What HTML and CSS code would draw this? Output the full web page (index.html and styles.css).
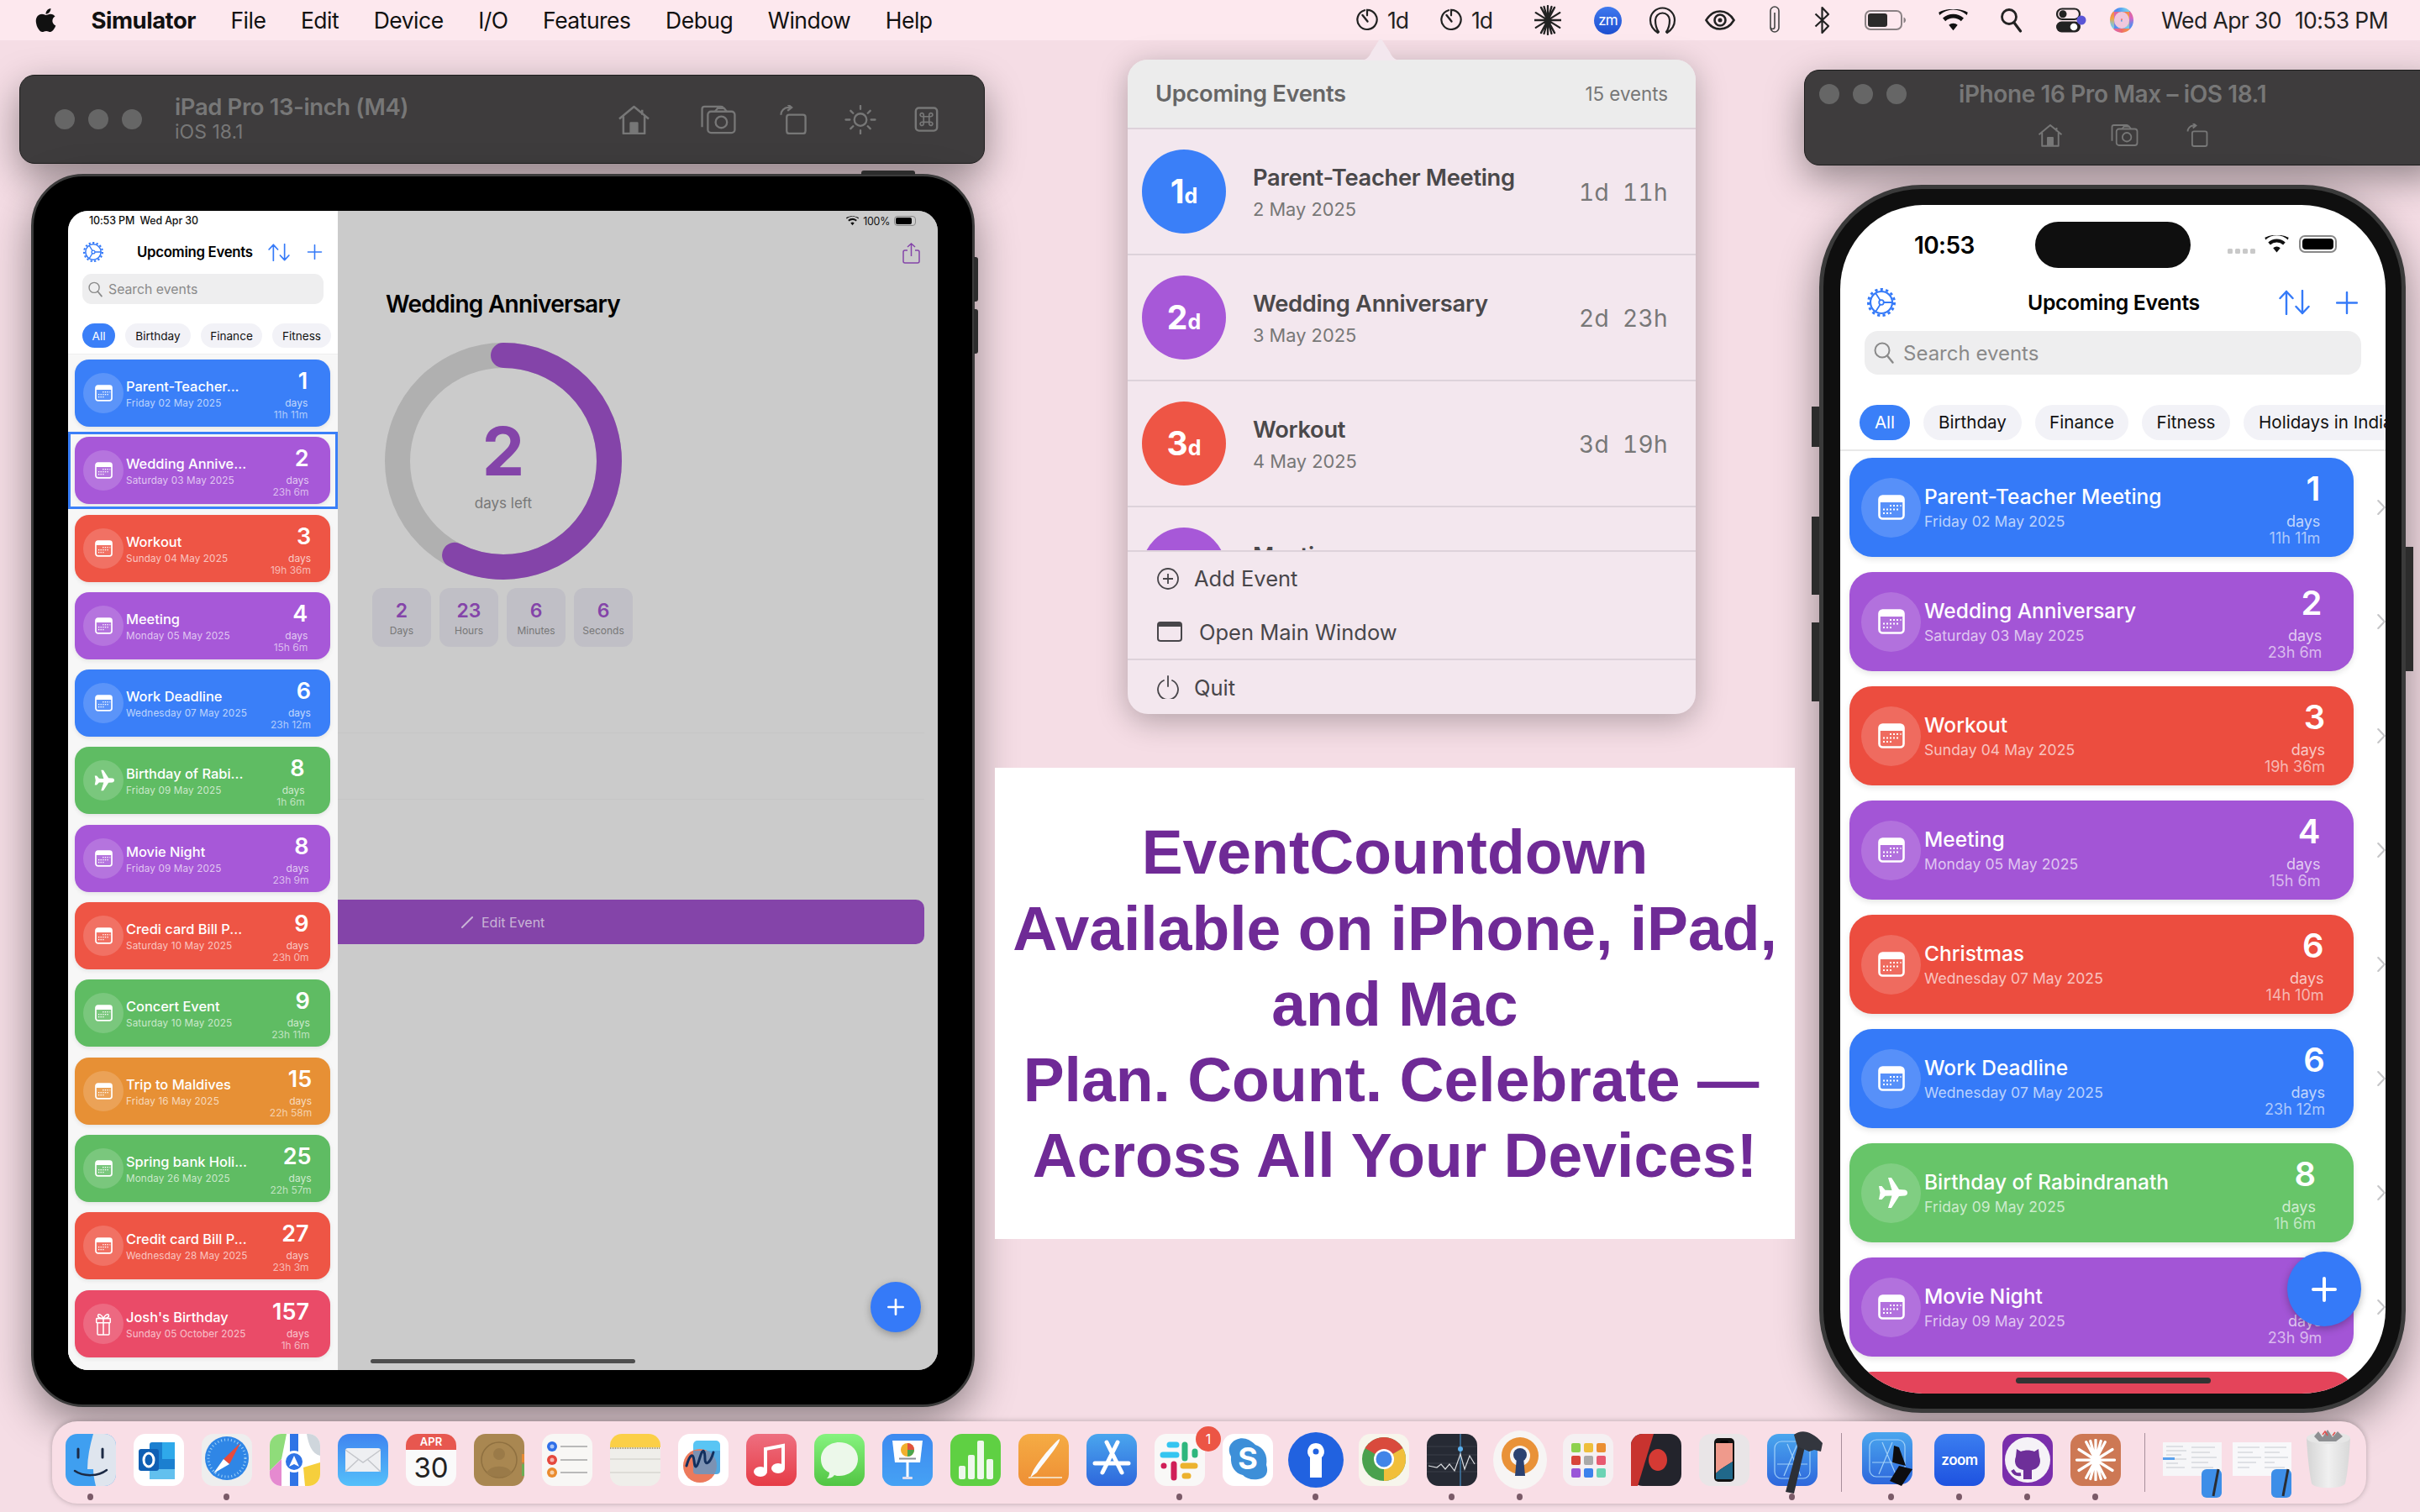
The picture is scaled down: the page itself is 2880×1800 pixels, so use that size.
FILE: index.html
```html
<!DOCTYPE html>
<html lang="en">
<head>
<meta charset="utf-8">
<title>EventCountdown</title>
<link rel="stylesheet" href="styles.css">
</head>
<body>
<svg class="defs" width="0" height="0" aria-hidden="true">
  <defs>
    <symbol id="cal" viewBox="0 0 32 30"><rect x="1.5" y="1.5" width="29" height="27" rx="4" fill="none" stroke="#fff" stroke-width="2.6"/><path d="M1.5 9V5.5a4 4 0 0 1 4-4h21a4 4 0 0 1 4 4V9z" fill="#fff"/><g fill="#fff"><rect x="14" y="12" width="2" height="2"/><rect x="18" y="12" width="2" height="2"/><rect x="22" y="12" width="2" height="2"/><rect x="26" y="12" width="2" height="2" opacity=".6"/><rect x="6" y="16.500" width="2" height="2"/><rect x="10" y="16.500" width="2" height="2"/><rect x="14" y="16.500" width="2" height="2"/><rect x="18" y="16.500" width="2" height="2"/><rect x="22" y="16.500" width="2" height="2"/><rect x="6" y="21" width="2" height="2"/><rect x="10" y="21" width="2" height="2"/><rect x="14" y="21" width="2" height="2"/></g></symbol>
    <symbol id="plane" viewBox="0 0 38 38"><path d="M15 1h4l9 14 7 .5c2 .3 3 1.800 3 3.500s-1 3.200-3 3.500l-7 .5-9 14h-4l4.500-14.500-8 .3L7.500 27H4l1.500-8L4 11h3.500l4 4.700 8 .3z" fill="#fff"/></symbol>
    <symbol id="gift" viewBox="0 0 30 44"><g fill="none" stroke="#fff" stroke-width="2.400"><rect x="2" y="12" width="26" height="8" rx="1"/><path d="M4 20v21a1.500 1.500 0 0 0 1.500 1.500h19A1.500 1.500 0 0 0 26 41V20M15 12v31M15 12c-3-7-9-10-10-6-1 4 5 6 10 6zM15 12c3-7 9-10 10-6 1 4-5 6-10 6z"/></g></symbol>
    <symbol id="gear" viewBox="0 0 34 34"><g fill="none" stroke="#357af8"><circle cx="17" cy="17" r="13" stroke-width="2.200"/><circle cx="17" cy="17" r="15.500" stroke-width="3" stroke-dasharray="3.200 3.280"/><circle cx="17" cy="17" r="2.800" stroke-width="1.800"/><path d="M19.800 17H30M15.600 14.600 10 5.800M15.600 19.400 10 28.200" stroke-width="1.800"/></g></symbol>
    <symbol id="sort" viewBox="0 0 37 30"><path d="M9 29V2M1.500 10 9 2l7.500 8M28 1v27M20.500 20l7.500 8 7.500-8" fill="none" stroke="#357af8" stroke-width="2.400" stroke-linecap="round" stroke-linejoin="round"/></symbol>
    <symbol id="plus" viewBox="0 0 26 27"><path d="M13 1v25M1 13.500h24" fill="none" stroke="#357af8" stroke-width="2.400" stroke-linecap="round"/></symbol>
    <symbol id="glass" viewBox="0 0 24 26"><circle cx="10" cy="10" r="8.500" fill="none" stroke="#8a8a8a" stroke-width="2"/><path d="M16 16.500l6.500 8" stroke="#8a8a8a" stroke-width="2.400" stroke-linecap="round"/></symbol>
    <symbol id="wifi" viewBox="0 0 30 22"><path d="M15 21.500 10.500 16a6.500 6.500 0 0 1 9 0zM7 12a11.800 11.800 0 0 1 16 0l2.700-3.200a16 16 0 0 0-21.400 0zM1 5.800a20.500 20.500 0 0 1 28 0L29.800 3C21-1.500 9-1.500.2 3z" fill="#111"/></symbol>
    <symbol id="chev" viewBox="0 0 12 22"><path d="M1.500 1.500 10.500 11l-9 9.500" fill="none" stroke="#c6c6c8" stroke-width="2.600" stroke-linecap="round" stroke-linejoin="round"/></symbol>
    <symbol id="whiteplus" viewBox="0 0 30 30"><path d="M15 2v26M2 15h26" fill="none" stroke="#fff" stroke-width="4" stroke-linecap="round"/></symbol>
    <symbol id="timer" viewBox="0 0 26 30"><path d="M10 3.200a11.600 11.600 0 1 0 3-.4v6.500" fill="none" stroke="#222" stroke-width="2.200" stroke-linecap="round"/><path d="M7.500 9 13.500 16.500" stroke="#222" stroke-width="2.400" stroke-linecap="round"/></symbol>
    <symbol id="t-home" viewBox="0 0 40 36"><path d="M2 17 20 2l18 15M7 14v21h26V14M16 35V22h8v13M30 6v6" fill="none" stroke="#777" stroke-width="2.600" stroke-linejoin="round"/><rect x="16" y="22" width="8" height="13" fill="#777"/></symbol>
    <symbol id="t-cam" viewBox="0 0 44 36"><g fill="none" stroke="#777" stroke-width="2.400"><path d="M2 27V5a3 3 0 0 1 3-3h20a3 3 0 0 1 3 3"/><rect x="9" y="8" width="33" height="26" rx="4"/><path d="M18 8l3-4h8l3 4"/><circle cx="25.500" cy="21" r="7"/></g></symbol>
    <symbol id="t-rot" viewBox="0 0 34 36"><g fill="none" stroke="#777" stroke-width="2.400"><rect x="9" y="12" width="23" height="23" rx="3"/><path d="M2 12a9 9 0 0 1 9-9h3M10 -1l5 4-5 4"/></g></symbol>
    <symbol id="t-sun" viewBox="0 0 40 36"><g fill="none" stroke="#777" stroke-width="2.400" stroke-linecap="round"><circle cx="20" cy="18" r="7.500"/><path d="M20 1v4M20 31v4M2 18h5M33 18h5M8 7l3 3M32 7l-3 3M8 29l3-3M32 29l-3-3"/></g></symbol>
    <symbol id="t-key" viewBox="0 0 30 32"><rect x="1.500" y="1.500" width="27" height="29" rx="4" fill="none" stroke="#777" stroke-width="2.600"/><path d="M11.500 12.500h7v7h-7zM11.500 12.500h-2a2.200 2.200 0 1 1 2-2zM18.500 12.500h2a2.200 2.200 0 1 0-2-2zM11.500 19.500h-2a2.200 2.200 0 1 0 2 2zM18.500 19.500h2a2.200 2.200 0 1 1-2 2z" fill="none" stroke="#777" stroke-width="1.800"/></symbol>
    <symbol id="burst" viewBox="0 0 36 40"><g stroke-width="2.600" stroke-linecap="round"><path d="M18 1v38M9 3l18 34M27 3 9 37M2 10l32 20M34 10 2 30M0 20h36M13 2l10 36M23 2 13 38"/></g></symbol>
    <linearGradient id="gBlue" x1="0" y1="0" x2="0" y2="1"><stop offset="0" stop-color="#3f84f0"/><stop offset="1" stop-color="#55c0fa"/></linearGradient>
    <linearGradient id="gBlue2" x1="0" y1="0" x2="0" y2="1"><stop offset="0" stop-color="#4aa6ee"/><stop offset="1" stop-color="#2e67dc"/></linearGradient>
    <linearGradient id="gRed" x1="0" y1="0" x2="0" y2="1"><stop offset="0" stop-color="#ee6f80"/><stop offset="1" stop-color="#e63c46"/></linearGradient>
    <linearGradient id="gGreen" x1="0" y1="0" x2="0" y2="1"><stop offset="0" stop-color="#86f37f"/><stop offset="1" stop-color="#52c543"/></linearGradient>
    <linearGradient id="gOrange" x1="0" y1="0" x2="0" y2="1"><stop offset="0" stop-color="#f5ac44"/><stop offset="1" stop-color="#ee8f35"/></linearGradient>
    <linearGradient id="gZoom" x1="0" y1="0" x2="0" y2="1"><stop offset="0" stop-color="#3b7ef0"/><stop offset="1" stop-color="#1e52e0"/></linearGradient>
    <linearGradient id="gTrash" x1="0" y1="0" x2="1" y2="0"><stop offset="0" stop-color="#d4d4d4"/><stop offset=".5" stop-color="#f0f0f0"/><stop offset="1" stop-color="#d8d8d8"/></linearGradient>
  </defs>
</svg>

<main class="desktop">
  <header class="menubar">
    <nav class="menu-left">
      <svg class="apple" width="27" height="32" viewBox="0 0 384 512"><path fill="#111" d="M318.700 268.700c-.2-36.700 16.400-64.400 50-84.800-18.800-26.900-47.200-41.700-84.700-44.600-35.500-2.800-74.300 20.700-88.500 20.700-15 0-49.400-19.700-76.400-19.700C63.300 141.200 4 184.800 4 273.500q0 39.300 14.400 81.200c12.800 36.700 59 126.700 107.200 125.200 25.200-.6 43-17.900 75.800-17.900 31.800 0 48.300 17.900 76.400 17.900 48.600-.7 90.400-82.500 102.600-119.300-65.200-30.700-61.700-90-61.700-91.900zm-56.600-164.200c27.300-32.400 24.800-61.900 24-72.500-24.100 1.400-52 16.400-67.900 34.900-17.500 19.800-27.800 44.300-25.600 71.900 26.100 2 49.900-11.400 69.500-34.300z"/></svg>
      <b class="app-name">Simulator</b><span>File</span><span>Edit</span><span>Device</span><span>I/O</span><span>Features</span><span>Debug</span><span>Window</span><span>Help</span>
    </nav>
    <div class="menu-right">
      <span class="extra"><svg width="26" height="30"><use href="#timer"/></svg>1d</span>
      <span class="extra"><svg width="26" height="30"><use href="#timer"/></svg>1d</span>
      <svg class="ml45 ink" width="32" height="36"><use href="#burst"/></svg>
      <span class="zm ml39">zm</span>
      <svg class="ml32" width="33" height="34" viewBox="0 0 33 34"><path d="M11 32C5 28 2 23 2 17a14.500 14.500 0 0 1 29 0c0 6-3 11-9 15M12 31c-3-4-4-9-4-14a8.500 8.500 0 0 1 17 0c0 5-1 10-4 14" fill="none" stroke="#222" stroke-width="2.200" stroke-linecap="round"/></svg>
      <svg class="ml34" width="36" height="24" viewBox="0 0 36 24"><path d="M1.500 12C6 4.500 12 1.500 18 1.500S30 4.500 34.500 12C30 19.500 24 22.500 18 22.500S6 19.500 1.500 12z" fill="none" stroke="#222" stroke-width="2.600"/><circle cx="18" cy="12" r="6.500" fill="none" stroke="#222" stroke-width="2.600"/><circle cx="18" cy="12" r="2.500" fill="#222"/></svg>
      <svg class="ml38" width="17" height="34" viewBox="0 0 17 34"><path d="M4 9v18a5 5 0 0 0 10 0V7a5 5 0 0 0-10 0v19a2 2 0 0 0 5 0V9" transform="translate(0 -1)" fill="none" stroke="#444" stroke-width="1.600"/></svg>
      <svg class="ml39" width="20" height="34" viewBox="0 0 20 34"><path d="M1.500 9.500 17 24l-7.500 8V2L17 10 1.500 24.500" fill="none" stroke="#222" stroke-width="2.200" stroke-linejoin="round"/></svg>
      <svg class="ml40" width="50" height="24" viewBox="0 0 50 24"><rect x="1" y="1" width="43" height="22" rx="6" fill="none" stroke="#8a8184" stroke-width="2"/><rect x="4" y="4" width="23" height="16" rx="3" fill="#2a2a2a"/><path d="M46.500 8.500c2 1 2.500 2.500 2.500 3.500s-.5 2.500-2.500 3.500z" fill="#8a8184"/></svg>
      <svg class="ml38" width="35" height="26"><use href="#wifi"/></svg>
      <svg class="ml38" width="27" height="30" viewBox="0 0 27 30"><circle cx="11" cy="11" r="8.500" fill="none" stroke="#222" stroke-width="2.800"/><path d="M17 18l7.500 10" stroke="#222" stroke-width="3.200" stroke-linecap="round"/></svg>
      <svg class="ml40" width="36" height="30" viewBox="0 0 36 30"><rect x="1" y="1.500" width="27" height="12.500" rx="6.200" fill="none" stroke="#222" stroke-width="2.200"/><circle cx="8" cy="7.700" r="4.500" fill="#222"/><rect x="0" y="16.500" width="29" height="13" rx="6.500" fill="#222"/><circle cx="21" cy="23" r="4.300" fill="#fff"/><circle cx="30" cy="15" r="5.500" fill="#5a55d6"/></svg>
      <span class="siri"></span>
      <span class="clock">Wed Apr 30</span><span class="clock time">10:53 PM</span>
    </div>
  </header>

  <section class="toolbar tb-ipad">
    <div class="lights"><i></i><i></i><i></i></div>
    <div class="tb-title"><strong>iPad Pro 13-inch (M4)</strong><small>iOS 18.1</small></div>
    <svg class="ti-home" width="39" height="35"><use href="#t-home"/></svg>
    <svg class="ti-cam" width="44" height="35"><use href="#t-cam"/></svg>
    <svg class="ti-rot" width="34" height="35"><use href="#t-rot"/></svg>
    <svg class="ti-sun" width="40" height="35"><use href="#t-sun"/></svg>
    <svg class="ti-key" width="29" height="30"><use href="#t-key"/></svg>
  </section>

  <section class="toolbar tb-iphone">
    <div class="tb-row"><div class="lights"><i></i><i></i><i></i></div><strong>iPhone 16 Pro Max – iOS 18.1</strong></div>
    <div class="tb-tools">
      <svg width="30" height="28"><use href="#t-home"/></svg>
      <svg width="33" height="28"><use href="#t-cam"/></svg>
      <svg width="26" height="28"><use href="#t-rot"/></svg>
    </div>
  </section>

  <section class="ipad">
    <i class="btn btn-top"></i><i class="btn btn-r1"></i><i class="btn btn-r2"></i>
    <div class="ipad-screen">
      <aside class="sidebar">
        <div class="pad-status">10:53 PM&nbsp;&nbsp;Wed Apr 30</div>
        <div class="pad-nav">
          <svg width="24" height="24"><use href="#gear"/></svg>
          <span class="nav-title">Upcoming Events</span>
          <svg class="pn-sort" width="26" height="21"><use href="#sort"/></svg>
          <svg class="pn-plus" width="19" height="18"><use href="#plus"/></svg>
        </div>
        <div class="search"><svg width="17" height="19"><use href="#glass"/></svg>Search events</div>
        <div class="pills"><span class="pill on">All</span><span class="pill">Birthday</span><span class="pill">Finance</span><span class="pill">Fitness</span></div>
        <div class="list">
          <article class="card blue"><span class="ic"><svg><use href="#cal"/></svg></span><div class="tx"><h3>Parent-Teacher...</h3><p>Friday 02 May 2025</p></div><div class="slot"><div class="tr"><b>1</b><span>days</span><em>11h 11m</em></div></div></article>
          <article class="card purple sel"><span class="ic"><svg><use href="#cal"/></svg></span><div class="tx"><h3>Wedding Annive...</h3><p>Saturday 03 May 2025</p></div><div class="slot"><div class="tr"><b>2</b><span>days</span><em>23h 6m</em></div></div></article>
          <article class="card red"><span class="ic"><svg><use href="#cal"/></svg></span><div class="tx"><h3>Workout</h3><p>Sunday 04 May 2025</p></div><div class="slot"><div class="tr"><b>3</b><span>days</span><em>19h 36m</em></div></div></article>
          <article class="card purple"><span class="ic"><svg><use href="#cal"/></svg></span><div class="tx"><h3>Meeting</h3><p>Monday 05 May 2025</p></div><div class="slot"><div class="tr"><b>4</b><span>days</span><em>15h 6m</em></div></div></article>
          <article class="card blue"><span class="ic"><svg><use href="#cal"/></svg></span><div class="tx"><h3>Work Deadline</h3><p>Wednesday 07 May 2025</p></div><div class="slot"><div class="tr"><b>6</b><span>days</span><em>23h 12m</em></div></div></article>
          <article class="card green"><span class="ic"><svg class="pl"><use href="#plane"/></svg></span><div class="tx"><h3>Birthday of Rabi...</h3><p>Friday 09 May 2025</p></div><div class="slot"><div class="tr"><b>8</b><span>days</span><em>1h 6m</em></div></div></article>
          <article class="card purple"><span class="ic"><svg><use href="#cal"/></svg></span><div class="tx"><h3>Movie Night</h3><p>Friday 09 May 2025</p></div><div class="slot"><div class="tr"><b>8</b><span>days</span><em>23h 9m</em></div></div></article>
          <article class="card red"><span class="ic"><svg><use href="#cal"/></svg></span><div class="tx"><h3>Credi card Bill P...</h3><p>Saturday 10 May 2025</p></div><div class="slot"><div class="tr"><b>9</b><span>days</span><em>23h 0m</em></div></div></article>
          <article class="card green"><span class="ic"><svg><use href="#cal"/></svg></span><div class="tx"><h3>Concert Event</h3><p>Saturday 10 May 2025</p></div><div class="slot"><div class="tr"><b>9</b><span>days</span><em>23h 11m</em></div></div></article>
          <article class="card orange"><span class="ic"><svg><use href="#cal"/></svg></span><div class="tx"><h3>Trip to Maldives</h3><p>Friday 16 May 2025</p></div><div class="slot"><div class="tr"><b>15</b><span>days</span><em>22h 58m</em></div></div></article>
          <article class="card green"><span class="ic"><svg><use href="#cal"/></svg></span><div class="tx"><h3>Spring bank Holi...</h3><p>Monday 26 May 2025</p></div><div class="slot"><div class="tr"><b>25</b><span>days</span><em>22h 57m</em></div></div></article>
          <article class="card red"><span class="ic"><svg><use href="#cal"/></svg></span><div class="tx"><h3>Credit card Bill P...</h3><p>Wednesday 28 May 2025</p></div><div class="slot"><div class="tr"><b>27</b><span>days</span><em>23h 3m</em></div></div></article>
          <article class="card pink"><span class="ic"><svg class="gf"><use href="#gift"/></svg></span><div class="tx"><h3>Josh's Birthday</h3><p>Sunday 05 October 2025</p></div><div class="slot"><div class="tr"><b>157</b><span>days</span><em>1h 6m</em></div></div></article>
        </div>
      </aside>
      <div class="detail">
        <div class="pad-right-status">
          <svg width="15" height="12"><use href="#wifi"/></svg><span>100%</span>
          <span class="pad-batt"><i></i></span>
        </div>
        <div class="share"><svg width="21" height="25" viewBox="0 0 21 25"><path d="M6 9H3a2 2 0 0 0-2 2v11a2 2 0 0 0 2 2h15a2 2 0 0 0 2-2V11a2 2 0 0 0-2-2h-3M10.500 16V1M6 5l4.500-4L15 5" fill="none" stroke="#8444a9" stroke-width="1.500"/></svg></div>
        <h2 class="d-title">Wedding Anniversary</h2>
        <svg class="ring" width="282" height="282" viewBox="0 0 282 282">
          <circle cx="141" cy="141" r="126" fill="none" stroke="#b0b0b0" stroke-width="30"/>
          <circle cx="141" cy="141" r="126" fill="none" stroke="#8444a9" stroke-width="30" stroke-linecap="round" pathLength="100" stroke-dasharray="57.600 100" transform="rotate(-90 141 141)"/>
          <text class="ring-num" x="141" y="158" text-anchor="middle">2</text>
          <text class="ring-lab" x="141" y="197" text-anchor="middle">days left</text>
        </svg>
        <div class="stats">
          <div class="stat"><b>2</b><span>Days</span></div>
          <div class="stat"><b>23</b><span>Hours</span></div>
          <div class="stat"><b>6</b><span>Minutes</span></div>
          <div class="stat"><b>6</b><span>Seconds</span></div>
        </div>
        <hr class="d-sep s1"><hr class="d-sep s2">
        <div class="edit"><svg width="15" height="15" viewBox="0 0 15 15"><path d="M1 14 13 2" stroke="#c9b5d6" stroke-width="2" stroke-linecap="round"/></svg>Edit Event</div>
        <div class="fab fab-pad"><svg width="20" height="20"><use href="#whiteplus"/></svg></div>
        <i class="home-pad"></i>
      </div>
    </div>
  </section>

  <section class="iphone">
    <i class="btn bl1"></i><i class="btn bl2"></i><i class="btn bl3"></i><i class="btn br1"></i>
    <div class="phone-screen">
      <div class="ph-status">
        <span class="ph-time">10:53</span><i class="island"></i>
        <span class="ph-dots"><i></i><i></i><i></i><i></i></span>
        <svg class="ph-wifi" width="29" height="21"><use href="#wifi"/></svg>
        <span class="ph-batt"><i></i></span>
      </div>
      <div class="ph-nav">
        <svg width="34" height="34"><use href="#gear"/></svg>
        <span class="nav-title">Upcoming Events</span>
        <svg class="ph-sort" width="37" height="30"><use href="#sort"/></svg>
        <svg class="ph-plus" width="26" height="27"><use href="#plus"/></svg>
      </div>
      <div class="search"><svg width="24" height="26"><use href="#glass"/></svg>Search events</div>
      <div class="pills"><span class="pill on">All</span><span class="pill">Birthday</span><span class="pill">Finance</span><span class="pill">Fitness</span><span class="pill">Holidays in India</span></div>
      <div class="list">
        <div class="ph-row"><article class="card blue"><span class="ic"><svg><use href="#cal"/></svg></span><div class="tx"><h3>Parent-Teacher Meeting</h3><p>Friday 02 May 2025</p></div><div class="slot"><div class="tr"><b>1</b><span>days</span><em>11h 11m</em></div></div></article><svg class="chev"><use href="#chev"/></svg></div>
        <div class="ph-row"><article class="card purple"><span class="ic"><svg><use href="#cal"/></svg></span><div class="tx"><h3>Wedding Anniversary</h3><p>Saturday 03 May 2025</p></div><div class="slot"><div class="tr"><b>2</b><span>days</span><em>23h 6m</em></div></div></article><svg class="chev"><use href="#chev"/></svg></div>
        <div class="ph-row"><article class="card red"><span class="ic"><svg><use href="#cal"/></svg></span><div class="tx"><h3>Workout</h3><p>Sunday 04 May 2025</p></div><div class="slot"><div class="tr"><b>3</b><span>days</span><em>19h 36m</em></div></div></article><svg class="chev"><use href="#chev"/></svg></div>
        <div class="ph-row"><article class="card purple"><span class="ic"><svg><use href="#cal"/></svg></span><div class="tx"><h3>Meeting</h3><p>Monday 05 May 2025</p></div><div class="slot"><div class="tr"><b>4</b><span>days</span><em>15h 6m</em></div></div></article><svg class="chev"><use href="#chev"/></svg></div>
        <div class="ph-row"><article class="card red"><span class="ic"><svg><use href="#cal"/></svg></span><div class="tx"><h3>Christmas</h3><p>Wednesday 07 May 2025</p></div><div class="slot"><div class="tr"><b>6</b><span>days</span><em>14h 10m</em></div></div></article><svg class="chev"><use href="#chev"/></svg></div>
        <div class="ph-row"><article class="card blue"><span class="ic"><svg><use href="#cal"/></svg></span><div class="tx"><h3>Work Deadline</h3><p>Wednesday 07 May 2025</p></div><div class="slot"><div class="tr"><b>6</b><span>days</span><em>23h 12m</em></div></div></article><svg class="chev"><use href="#chev"/></svg></div>
        <div class="ph-row"><article class="card green"><span class="ic"><svg class="pl"><use href="#plane"/></svg></span><div class="tx"><h3>Birthday of Rabindranath</h3><p>Friday 09 May 2025</p></div><div class="slot"><div class="tr"><b>8</b><span>days</span><em>1h 6m</em></div></div></article><svg class="chev"><use href="#chev"/></svg></div>
        <div class="ph-row"><article class="card purple"><span class="ic"><svg><use href="#cal"/></svg></span><div class="tx"><h3>Movie Night</h3><p>Friday 09 May 2025</p></div><div class="slot"><div class="tr"><b>8</b><span>days</span><em>23h 9m</em></div></div></article><svg class="chev"><use href="#chev"/></svg></div>
        <div class="ph-row"><article class="card pink2"></article></div>
      </div>
      <div class="fab fab-ph"><svg width="30" height="30"><use href="#whiteplus"/></svg></div>
      <i class="home-ph"></i>
    </div>
  </section>

  <section class="popover">
    <svg class="pop-arrow" width="52" height="26" viewBox="0 0 52 26"><path d="M0 26c8 0 12-3 15-10L24 2c1-2 3-2 4 0l9 14c3 7 7 10 15 10z" fill="#f3e7ee"/></svg>
    <header class="pop-head"><strong>Upcoming Events</strong><span>15 events</span></header>
    <div class="pop-list">
      <div class="pop-row"><span class="badge blue"><b>1</b>d</span><div class="pop-tx"><strong>Parent-Teacher Meeting</strong><span>2 May 2025</span></div><span class="pop-time">1d&nbsp;&nbsp;11h</span></div>
      <div class="pop-row"><span class="badge purple"><b>2</b>d</span><div class="pop-tx"><strong>Wedding Anniversary</strong><span>3 May 2025</span></div><span class="pop-time">2d&nbsp;&nbsp;23h</span></div>
      <div class="pop-row"><span class="badge red"><b>3</b>d</span><div class="pop-tx"><strong>Workout</strong><span>4 May 2025</span></div><span class="pop-time">3d&nbsp;&nbsp;19h</span></div>
      <div class="pop-row"><span class="badge purple"></span><div class="pop-tx"><strong>Meeting</strong></div></div>
    </div>
    <footer class="pop-foot">
      <div class="pop-act a-add"><svg width="26" height="26" viewBox="0 0 26 26"><circle cx="13" cy="13" r="12" fill="none" stroke="#48464a" stroke-width="1.800"/><path d="M13 7v12M7 13h12" stroke="#48464a" stroke-width="1.800"/></svg>Add Event</div>
      <div class="pop-act a-open"><svg width="30" height="24" viewBox="0 0 30 24"><rect x="1" y="1" width="28" height="22" rx="3" fill="none" stroke="#48464a" stroke-width="2"/><path d="M1 6V4a3 3 0 0 1 3-3h22a3 3 0 0 1 3 3v2z" fill="#48464a"/></svg>Open Main Window</div>
      <div class="pop-act a-quit"><svg width="26" height="28" viewBox="0 0 26 28"><path d="M8 6a12 12 0 1 0 10 0M13 1v12" fill="none" stroke="#48464a" stroke-width="1.800" stroke-linecap="round"/></svg>Quit</div>
    </footer>
  </section>

  <section class="banner">
    <p>EventCountdown</p><p>Available on iPhone, iPad,</p><p>and Mac</p><p class="dash-line">Plan. Count. Celebrate —</p><p>Across All Your Devices!</p>
  </section>

  <footer class="dock">
    <div class="di run"><svg width="60" height="62" viewBox="0 0 60 62"><rect width="60" height="62" rx="14" fill="#3f9ff0"/><path d="M33 0h13a14 14 0 0 1 14 14v34a14 14 0 0 1-14 14H36c-2-8-3-14-3-20h-7c0-14 3-28 7-42z" fill="#dfe5ee"/><path d="M15 18v10M44 18v10" stroke="#1c2a44" stroke-width="3" stroke-linecap="round"/><path d="M11 44c10 7 28 7 38-1" fill="none" stroke="#1c2a44" stroke-width="2.500" stroke-linecap="round"/></svg></div>
    <div class="di"><svg width="60" height="62" viewBox="0 0 60 62"><rect width="60" height="62" rx="14" fill="#fff"/><rect x="19" y="10" width="30" height="42" rx="3" fill="#1b7fd0"/><rect x="34" y="10" width="15" height="20" fill="#2fa9ea"/><rect x="19" y="42" width="30" height="12" fill="#62c0ee"/><rect x="6" y="18" width="24" height="26" rx="3" fill="#0f5fb4"/><ellipse cx="18" cy="31" rx="6" ry="8" fill="none" stroke="#fff" stroke-width="3"/></svg></div>
    <div class="di run"><svg width="60" height="62" viewBox="0 0 60 62"><rect width="60" height="62" rx="14" fill="#eee"/><circle cx="30" cy="29" r="26" fill="#2f86e6"/><circle cx="30" cy="29" r="22" fill="none" stroke="#9fd0f6" stroke-width="3" stroke-dasharray="1 3"/><path d="M46 11 26 33l7-8z" fill="#e84b3c"/><path d="M46 11 33 36l-7-6z" fill="#e84b3c"/><path d="M14 47 33 36l-7-6z" fill="#fff"/></svg></div>
    <div class="di"><svg width="60" height="62" viewBox="0 0 60 62"><rect width="60" height="62" rx="14" fill="#fff"/><path d="M0 14a14 14 0 0 1 14-14h6l-6 30-14 14z" fill="#8fdc7a"/><path d="M0 44l14-14v32A14 14 0 0 1 0 48z" fill="#e58ad0"/><path d="M40 40l20-6v14a14 14 0 0 1-14 14h-4z" fill="#f6cf3c"/><path d="M44 0h2a14 14 0 0 1 14 14v12C50 24 46 12 44 0z" fill="#cfd6dc"/><path d="M24 0h10v62H24z" fill="#2f74e6"/><circle cx="29" cy="33" r="13" fill="#fff"/><circle cx="29" cy="33" r="10" fill="#2f74e6"/><path d="M29 26l6 13-6-3-6 3z" fill="#fff"/></svg></div>
    <div class="di"><svg width="60" height="62" viewBox="0 0 60 62"><rect width="60" height="62" rx="14" fill="url(#gBlue)"/><rect x="9" y="17" width="42" height="28" rx="3" fill="#eeeff2"/><path d="M9 19 30 34 51 19M9 45l16-15M51 45 35 30" fill="none" stroke="#c4c6cb" stroke-width="1.500"/></svg></div>
    <div class="di"><svg width="60" height="62" viewBox="0 0 60 62"><rect width="60" height="62" rx="14" fill="#fafafa"/><path d="M0 19V14A14 14 0 0 1 14 0h32a14 14 0 0 1 14 14v5z" fill="#e7574f"/><text class="d-apr" x="30" y="14" text-anchor="middle">APR</text><text class="d-30" x="30" y="52" text-anchor="middle">30</text></svg></div>
    <div class="di"><svg width="60" height="62" viewBox="0 0 60 62"><rect width="60" height="62" rx="14" fill="#a98751"/><rect x="57" y="24" width="5" height="10" fill="#e68a35"/><rect x="57" y="36" width="5" height="14" fill="#6cae55"/><circle cx="30" cy="31" r="21" fill="none" stroke="#8f7040" stroke-width="1.500"/><circle cx="30" cy="24" r="7" fill="#9a7a48"/><path d="M15 47c3-11 27-11 30 0-8 6-22 6-30 0z" fill="#9a7a48"/></svg></div>
    <div class="di"><svg width="60" height="62" viewBox="0 0 60 62"><rect width="60" height="62" rx="14" fill="#f8f7f5"/><g stroke="#b9b9b9" stroke-width="2"><path d="M22 15h32M22 31h32M22 46h32"/></g><circle cx="12" cy="15" r="6" fill="#2f6fe8"/><circle cx="12" cy="31" r="6" fill="#e5483d"/><circle cx="12" cy="46" r="6" fill="#ea8b2e"/><circle cx="12" cy="15" r="2.500" fill="#fff" opacity=".6"/><circle cx="12" cy="31" r="2.500" fill="#fff" opacity=".6"/><circle cx="12" cy="46" r="2.500" fill="#fff" opacity=".6"/></svg></div>
    <div class="di"><svg width="60" height="62" viewBox="0 0 60 62"><rect width="60" height="62" rx="14" fill="#efeeea"/><path d="M0 16V14A14 14 0 0 1 14 0h32a14 14 0 0 1 14 14v2z" fill="#fbcf47"/><path d="M0 17h60" stroke="#a89a70" stroke-width="2" stroke-dasharray="1 1"/><path d="M0 30h60M0 46h60" stroke="#d7d6d1" stroke-width="1.500"/></svg></div>
    <div class="di"><svg width="60" height="62" viewBox="0 0 60 62"><rect width="60" height="62" rx="14" fill="#fff"/><rect x="18" y="8" width="32" height="40" rx="5" fill="#59c5f4"/><circle cx="26" cy="38" r="20" fill="#ec7a5c"/><path d="M18 20h32v24a4 4 0 0 1-4 4H22c-2 0-4-1-4-3z" fill="#4d9cd8" opacity=".7"/><path d="M10 38c4-14 8-16 9-6s3 10 7-4 6-6 6 2 6 6 10-8" fill="none" stroke="#13305e" stroke-width="3" stroke-linecap="round"/></svg></div>
    <div class="di"><svg width="60" height="62" viewBox="0 0 60 62"><rect width="60" height="62" rx="14" fill="url(#gRed)"/><path d="M23 44V18l21-4v26" fill="none" stroke="#fff" stroke-width="4"/><ellipse cx="17" cy="45" rx="8" ry="6" fill="#fff"/><ellipse cx="38" cy="41" rx="8" ry="6" fill="#fff"/></svg></div>
    <div class="di"><svg width="60" height="62" viewBox="0 0 60 62"><rect width="60" height="62" rx="14" fill="url(#gGreen)"/><path d="M30 10c13 0 22 9 22 20s-9 20-22 20c-2 0-4 0-6-1-2 3-6 4-9 4 2-2 3-4 3-7C11 43 8 37 8 30c0-11 9-20 22-20z" fill="#ecf8ea"/></svg></div>
    <div class="di"><svg width="60" height="62" viewBox="0 0 60 62"><rect width="60" height="62" rx="14" fill="url(#gBlue)"/><rect width="60" height="62" rx="14" fill="#3c8ef0" opacity=".6"/><path d="M12 8h36l-3 26H15z" fill="#fff"/><circle cx="30" cy="19" r="8" fill="#f1b02d"/><path d="M30 11a8 8 0 0 1 8 8h-8z" fill="#e1523f"/><path d="M30 19h8a8 8 0 0 1-8 8z" fill="#4aa44e"/><path d="M20 29.500h20" stroke="#8a8f99" stroke-width="2"/><rect x="28.500" y="34" width="3" height="18" fill="#fff"/><rect x="24" y="51" width="12" height="3" rx="1" fill="#dde"/></svg></div>
    <div class="di"><svg width="60" height="62" viewBox="0 0 60 62"><rect width="60" height="62" rx="14" fill="#5fd043"/><g fill="#eef8ec"><rect x="10" y="38" width="8" height="16" rx="2"/><rect x="21" y="25" width="8" height="29" rx="2"/><rect x="32" y="8" width="8" height="46" rx="2"/><rect x="43" y="30" width="8" height="24" rx="2"/></g></svg></div>
    <div class="di"><svg width="60" height="62" viewBox="0 0 60 62"><rect width="60" height="62" rx="14" fill="url(#gOrange)"/><path d="M49 6c-4 2-22 22-31 37l-4 9 8-6C32 32 50 12 49 6z" fill="#fbfafa"/><path d="M12 52h40" stroke="#f4d9b6" stroke-width="2"/></svg></div>
    <div class="di"><svg width="60" height="62" viewBox="0 0 60 62"><rect width="60" height="62" rx="14" fill="url(#gBlue2)"/><g fill="none" stroke="#fff" stroke-width="5" stroke-linecap="round"><path d="M24 10l18 36M37 10 19 46"/></g><path d="M10 35h40" stroke="#fff" stroke-width="5" stroke-linecap="round"/></svg></div>
    <div class="di run slack"><svg width="60" height="62" viewBox="0 0 60 62"><rect width="60" height="62" rx="14" fill="#f9f8f7"/><g fill="none" stroke-width="7" stroke-linecap="round"><path d="M26 13h-8M26 25H10" stroke="#35c5f0"/><path d="M36 13v16M48 21v4" stroke="#2eb67d"/><path d="M34 38h14M36 50h4" stroke="#ecb22e"/><path d="M23 36v16M11 38v0" stroke="#d01f58"/></g></svg><span class="d-badge">1</span></div>
    <div class="di"><svg width="60" height="62" viewBox="0 0 60 62"><rect width="60" height="62" rx="14" fill="#fff"/><path d="M16 7c8-4 16-1 23 6 10 3 15 13 13 24 3 8 0 16-10 17-8 1-14-1-18-5-9-2-15-10-14-22-5-9-1-17 6-20z" fill="#3d8fd8"/><text class="d-s" x="30" y="42" text-anchor="middle">S</text></svg></div>
    <div class="di run"><svg width="66" height="66" viewBox="0 0 66 66"><circle cx="33" cy="33" r="33" fill="#2162e0"/><path d="M33 13a10 10 0 0 1 7 17v24h-14V30a10 10 0 0 1 7-17z" fill="#fff"/><circle cx="33" cy="23" r="3.500" fill="#2162e0"/></svg></div>
    <div class="di"><svg width="60" height="62" viewBox="0 0 60 62"><rect width="60" height="62" rx="14" fill="#f7f5ec"/><circle cx="30" cy="30" r="26" fill="#4aa14e"/><path d="M30 30 7.500 17A26 26 0 0 1 52.500 17z" fill="#d94a3d"/><path d="M30 30 52.500 17A26 26 0 0 1 30 56z" fill="#f1bf3a"/><circle cx="30" cy="30" r="12" fill="#fff"/><circle cx="30" cy="30" r="9.500" fill="#4285e8"/></svg></div>
    <div class="di run"><svg width="60" height="62" viewBox="0 0 60 62"><rect width="60" height="62" rx="14" fill="#262a34"/><path d="M0 15h60M0 25h60M0 35h60M0 45h60" stroke="#3a3e48"/><path d="M40 0v62" stroke="#4a9fe0"/><path d="M2 38l10 2 5-4 5 6 5-6 6 8 7-20 5 18 6-16 6 10" fill="none" stroke="#d8dade" stroke-width="1.200"/><circle cx="40" cy="18" r="3" fill="#5ab0ee"/></svg></div>
    <div class="di run"><svg width="66" height="70" viewBox="0 0 66 70"><ellipse cx="33" cy="35" rx="32" ry="35" fill="#f7f5f4"/><circle cx="33" cy="30" r="22" fill="#e99238"/><circle cx="33" cy="30" r="12" fill="#f7f5f4"/><circle cx="33" cy="29" r="8" fill="#2b4170"/><path d="M29 32h8l2 22h-12z" fill="#2b4170"/></svg></div>
    <div class="di"><svg width="60" height="62" viewBox="0 0 60 62"><rect width="60" height="62" rx="14" fill="#f5f0f2"/><rect x="10" y="11" width="11" height="11" rx="2" fill="#8dd14e"/><rect x="25" y="11" width="11" height="11" rx="2" fill="#eebf3c"/><rect x="40" y="11" width="11" height="11" rx="2" fill="#eb8f32"/><rect x="10" y="26" width="11" height="11" rx="2" fill="#d8453a"/><rect x="25" y="26" width="11" height="11" rx="2" fill="#a9a9a9"/><rect x="40" y="26" width="11" height="11" rx="2" fill="#e85a70"/><rect x="10" y="41" width="11" height="11" rx="2" fill="#9a56d8"/><rect x="25" y="41" width="11" height="11" rx="2" fill="#3c82ec"/><rect x="40" y="41" width="11" height="11" rx="2" fill="#6bd3b4"/></svg></div>
    <div class="di"><svg width="60" height="62" viewBox="0 0 60 62"><rect width="60" height="62" rx="14" fill="#23242c"/><path d="M14 0h13L8 62H0V14A14 14 0 0 1 14 0z" fill="#c8332f"/><ellipse cx="32" cy="31" rx="11" ry="13" fill="#d53a34"/></svg></div>
    <div class="di"><svg width="60" height="62" viewBox="0 0 60 62"><rect width="60" height="62" rx="14" fill="#e9e5e7"/><rect x="18" y="5" width="24" height="52" rx="5" fill="#111"/><path d="M20 11h20v22c-6 4-14 8-20 14z" fill="#ef9a8c"/><path d="M20 47c6-6 14-10 20-14v21H20z" fill="#20688a"/><rect x="25" y="8" width="10" height="3" rx="1.500" fill="#000"/></svg></div>
    <div class="di run xcode"><svg width="60" height="62" viewBox="0 0 60 62"><rect width="60" height="62" rx="14" fill="url(#gBlue2)"/><g fill="none" stroke="#9fd0f8" stroke-width="1.200"><rect x="9" y="9" width="42" height="44" rx="8"/><path d="M24 12l16 38M36 12 20 50M12 36h36"/></g></svg><svg class="hammer" width="70" height="76" viewBox="0 0 70 76"><path d="M18 74l16-60 8 2-14 60z" fill="#2c2f36"/><path d="M28 6c8-6 20-6 34 10l-2 10-8-2-6 2-14-6z" fill="#33363e"/></svg></div>
    <i class="dsep"></i>
    <div class="di run"><svg width="70" height="66" viewBox="0 0 70 66"><rect width="60" height="62" rx="14" fill="url(#gBlue2)"/><g fill="none" stroke="#9fd0f8" stroke-width="1.200"><rect x="9" y="9" width="42" height="44" rx="8"/><path d="M24 12l16 38M36 12 20 50M12 36h36"/></g><path d="M44 40 60 44 47 64 33 58z" fill="#0d0d0f"/><path d="M44 40l16 4-8-22-6-2z" fill="#0d0d0f" transform="translate(-8 -4)"/></svg></div>
    <div class="di run"><svg width="60" height="62" viewBox="0 0 60 62"><rect width="60" height="62" rx="14" fill="url(#gZoom)"/><text class="d-zoom" x="30" y="37" text-anchor="middle">zoom</text></svg></div>
    <div class="di run"><svg width="60" height="62" viewBox="0 0 60 62"><rect width="60" height="62" rx="14" fill="#7a2eac"/><circle cx="30" cy="31" r="27" fill="#f5f2f7"/><path d="M17 18l5 3c5-2 11-2 16 0l5-3 1 9c3 8-1 15-9 16v11h-10V43c-8-1-12-8-9-16z" fill="#6e2f99"/><path d="M22 48c-6 1-8-1-10-5" stroke="#6e2f99" stroke-width="4" fill="none"/></svg></div>
    <div class="di run"><svg width="60" height="62" viewBox="0 0 60 62"><rect width="60" height="62" rx="14" fill="#cd7854"/><svg x="6" y="6" width="48" height="50" class="white-burst"><use href="#burst"/></svg></svg></div>
    <i class="dsep s2"></i>
    <div class="thumb"><svg width="72" height="66" viewBox="0 0 72 66"><rect y="0" width="70" height="40" fill="#f6f6f8"/><path d="M4 5h20M4 10h24M4 15h18M4 20h24M4 25h14M4 30h22M34 6h28M34 12h22M34 18h30M34 24h20M34 30h26" stroke="#c6c9d0" stroke-width="1.200"/><rect y="18" width="14" height="3" fill="#5aa2ee"/><rect x="46" y="32" width="24" height="34" rx="6" fill="#3d8ee8"/><path d="M60 64 66 32" stroke="#2a2d33" stroke-width="3"/></svg></div>
    <div class="thumb t2"><svg width="72" height="66" viewBox="0 0 72 66"><rect y="0" width="70" height="40" fill="#f8f8fa"/><path d="M6 6h26M6 12h18M6 18h28M6 24h22M6 30h14M38 6h26M38 12h18M38 18h28M38 24h12M38 30h24" stroke="#c6c9d0" stroke-width="1.200"/><rect x="46" y="32" width="24" height="34" rx="6" fill="#3d8ee8"/><path d="M60 64 66 32" stroke="#2a2d33" stroke-width="3"/></svg></div>
    <div class="trash"><svg width="54" height="70" viewBox="0 0 54 70"><path d="M1 10c1 20 3 40 6 54 3 7 37 7 40 0 3-14 5-34 6-54z" fill="url(#gTrash)"/><ellipse cx="27" cy="10" rx="26" ry="7" fill="#e6e6e6"/><path d="M10 8l5-6 5 7 6-9 6 9 6-7 6 6-8 6H16z" fill="#8d8f92"/><path d="M20 6l3-4 3 5M32 7l3-4" stroke="#e34f4f" stroke-width="1.500" fill="none"/></svg></div>
  </footer>
</main>
</body>
</html>
```

FILE: styles.css
```css
* { box-sizing: border-box; }
html, body { margin: 0; padding: 0; }
body { font-family: "Inter", "Liberation Sans", sans-serif; background: #f5dde5; }
h2, h3, p { margin: 0; }
.defs { position: absolute; }
.desktop { position: relative; width: 2880px; height: 1800px; overflow: hidden; background: #f5dde5; }

/* menu bar */
.menubar { position: relative; z-index: 5; height: 48px; background: #fde8ee; display: flex; justify-content: space-between; align-items: center; padding: 0 38px 0 41px; font-size: 26.500px; color: #111; }
.menu-left { display: flex; align-items: center; gap: 41.500px; letter-spacing: -.5px; }
.apple { margin-right: -1px; }
.app-name { font-weight: 700; font-size: 27.500px; }
.menu-right { display: flex; align-items: center; gap: 38px; }
.extra { display: flex; align-items: center; gap: 11px; font-size: 26.500px; color: #222; letter-spacing: -1px; }
.ml45 { margin-left: 12px; }
.ml39 { margin-left: 1px; }
.ml32 { margin-left: -6px; }
.ml34 { margin-left: -4px; }
.ml38 { margin-left: 0; }
.ml40 { margin-left: 2px; }
.ink { stroke: #222; }
.zm { width: 33px; height: 33px; border-radius: 50%; background: linear-gradient(#3f79ee, #1d4ed0); color: #fff; font-size: 17px; display: flex; align-items: center; justify-content: center; letter-spacing: -1px; }
.siri { width: 28px; height: 30px; margin-left: -10px; border-radius: 50%; background: conic-gradient(#f06a6a, #f2a63c, #73c9ef, #4c8ff0, #d264c9, #f06a6a); border: 5px solid transparent; box-shadow: inset 0 0 0 8px #f0c7dc; }
.clock { font-size: 26.500px; color: #222; letter-spacing: -.6px; margin-left: -5px; }
.clock.time { margin-left: -22px; }

/* simulator toolbars */
.toolbar { position: absolute; background: #3e3c3d; border: 1px solid #1e1e1e; box-shadow: 0 16px 46px rgba(0,0,0,.4); color: #777; }
.lights { display: flex; gap: 16px; }
.lights i { width: 24px; height: 24px; border-radius: 50%; background: #666; }
.tb-ipad { left: 23px; top: 89px; width: 1149px; height: 106px; border-radius: 18px; display: flex; align-items: center; padding-left: 41px; }
.tb-title { display: flex; flex-direction: column; margin-left: 39px; width: 527px; }
.tb-title strong { font-size: 27.500px; font-weight: 600; line-height: 30px; letter-spacing: -.4px; }
.tb-title small { font-size: 23px; line-height: 30px; }
.ti-cam { margin-left: 59px; }
.ti-rot { margin-left: 50px; }
.ti-sun { margin-left: 43px; }
.ti-key { margin-left: 44px; }
.tb-iphone { left: 2147px; top: 83px; width: 760px; height: 114px; border-radius: 18px; padding: 11px 0 0 17px; }
.tb-row { display: flex; align-items: center; }
.tb-row strong { font-size: 28px; font-weight: 600; margin-left: 62px; letter-spacing: -.4px; }
.tb-tools { display: flex; margin: 18px 0 0 260px; gap: 57px; }

/* iPad */
.btn { position: absolute; background: #2c2c2c; display: block; }
.ipad { position: absolute; left: 37px; top: 207px; width: 1123px; height: 1468px; padding: 44px; background: #000; border: 3px solid #3b3b3b; border-radius: 62px; box-shadow: 0 18px 50px rgba(0,0,0,.42); }
.ipad > .ipad-screen { margin: -3px; }
.btn-top { left: 985px; top: -7px; width: 64px; height: 5px; border-radius: 3px 3px 0 0; }
.btn-r1 { right: -7px; top: 96px; width: 5px; height: 53px; border-radius: 0 3px 3px 0; }
.btn-r2 { right: -7px; top: 158px; width: 5px; height: 53px; border-radius: 0 3px 3px 0; }
.ipad-screen { position: relative; width: 1035px; height: 1380px; border-radius: 24px; overflow: hidden; display: flex; background: #cbcbcb; }
.sidebar { width: 321px; background: #fff; display: flex; flex-direction: column; font-size: 13px; }
.pad-status { height: 24px; line-height: 24px; padding-left: 25px; font-size: 12.400px; color: #111; font-weight: 500; letter-spacing: -.1px; }
.pad-nav { height: 50px; display: flex; align-items: center; padding-left: 18px; }
.pad-nav .nav-title { margin-left: 40px; width: 140px; font-size: 16.800px; font-weight: 600; white-space: nowrap; letter-spacing: -.3px; color: #000; }
.pn-sort { margin-left: 16px; }
.pn-plus { margin-left: 20px; }
.sidebar .search { margin: 1px 17px 0; height: 36px; border-radius: 11px; background: #eeeeef; display: flex; align-items: center; gap: 7px; padding-left: 7px; font-size: 15.800px; color: #8a8a8a; }
.sidebar .pills { margin-top: 23px; padding-left: 17px; gap: 12px; height: 29px; }
.pills { display: flex; overflow: hidden; flex: none; }
.pill { display: flex; align-items: center; justify-content: center; background: #f2f2f7; color: #111; border-radius: 30px; white-space: nowrap; flex: none; }
.pill.on { background: #3a7ff8; color: #fff; }
.sidebar .pill { font-size: 13.600px; width: 78px; }
.sidebar .pill.on { width: 39px; }
.sidebar .pill:nth-child(3) { width: 73px; }
.sidebar .pill:nth-child(4) { width: 70px; }
.sidebar .list { margin-top: 7px; border-top: 1px solid #eee; flex: 1; background: #f7f7f7; padding: 6px 9px 0 8px; display: flex; flex-direction: column; gap: 12.300px; overflow: hidden; }

/* event cards */
.card { position: relative; display: flex; color: #fff; flex: none; }
.blue { background: #3a7ff8; }
.purple { background: #a758d8; }
.red { background: #ee5545; }
.green { background: #5fbc63; }
.orange { background: #e79035; }
.pink { background: #ea4b68; }
.ic { display: flex; align-items: center; justify-content: center; border-radius: 50%; background: rgba(255,255,255,.17); align-self: center; flex: none; }
.tx { flex: 1; min-width: 0; }
.tx h3 { font-weight: 500; white-space: nowrap; }
.tx p { color: rgba(255,255,255,.68); white-space: nowrap; }
.tr { display: inline-flex; flex-direction: column; align-items: flex-end; }
.slot { display: flex; justify-content: center; flex: none; }
.tr b { font-weight: 600; }
.tr span { color: rgba(255,255,255,.7); }
.tr em { font-style: normal; color: rgba(255,255,255,.6); white-space: nowrap; }

.sidebar .card { height: 80px; border-radius: 17px; box-shadow: 0 2px 5px rgba(0,0,0,.08); padding: 0 7px 0 10px; }
.sidebar .ic { width: 48px; height: 48px; margin-right: 3px; }
.sidebar .ic svg { width: 21px; height: 20px; }
.sidebar .ic svg.pl { width: 26px; height: 26px; }
.sidebar .ic svg.gf { width: 20px; height: 28px; }
.sidebar .tx { padding-top: 22px; }
.sidebar .tx h3 { font-size: 16.400px; line-height: 21px; }
.sidebar .tx p { font-size: 11.700px; line-height: 18px; letter-spacing: .15px; }
.sidebar .slot { width: 80px; padding-top: 11px; }
.sidebar .tr b { font-size: 27px; line-height: 30px; margin-bottom: 4px; }
.sidebar .tr span, .sidebar .tr em { font-size: 12px; line-height: 14px; }
.sel::after { content: ""; position: absolute; top: -6px; bottom: -6px; left: -8px; right: -9px; border: 3px solid #3a7ff8; }

/* detail pane */
.detail { position: relative; flex: 1; display: flex; flex-direction: column; background: #cbcbcb; }
.pad-right-status { height: 24px; display: flex; align-items: center; justify-content: flex-end; padding-right: 26px; gap: 5px; font-size: 12.400px; color: #111; letter-spacing: -.3px; }
.pad-batt { width: 26px; height: 12px; border: 1px solid #888; border-radius: 4px; padding: 1px 4px 1px 1px; display: flex; }
.pad-batt i { flex: 1; background: #000; border-radius: 2px; }
.share { margin-top: 14px; height: 25px; display: flex; justify-content: flex-end; padding-right: 21px; }
.d-title { margin: 30px 0 0 57px; font-size: 28px; line-height: 36px; font-weight: 600; letter-spacing: -.72px; color: #000; }
.ring { margin: 28px 0 0 56px; flex: none; }
.ring-num { font-family: "Inter", sans-serif; font-size: 80px; font-weight: 700; fill: #8444a9; }
.ring-lab { font-family: "Inter", sans-serif; font-size: 17px; fill: #777; }
.stats { display: flex; gap: 10px; margin: 10px 0 0 41px; }
.stat { width: 70px; height: 70px; border-radius: 12px; background: #c0bfc6; display: flex; flex-direction: column; align-items: center; padding-top: 12px; }
.stat b { font-size: 23px; line-height: 30px; font-weight: 600; color: #8444a9; }
.stat span { font-size: 12px; line-height: 16px; color: #777; margin-top: 1px; }
.d-sep { margin: 0; border: 0; height: 1px; width: 698px; background: #c5c5c5; flex: none; }
.s1 { margin-top: 102px; }
.d-sep.s2 { margin-top: 78px; }
.edit { margin-top: 119px; width: 698px; height: 53px; flex: none; background: #8444a9; border-radius: 0 10px 10px 0; display: flex; align-items: center; gap: 9px; padding-left: 147px; font-size: 16px; color: #c9b5d6; }
.fab { position: absolute; border-radius: 50%; background: #357af8; display: flex; align-items: center; justify-content: center; box-shadow: 0 3px 10px rgba(0,0,0,.28); }
.fab-pad { width: 60px; height: 60px; left: 634px; top: 1275px; }
.home-pad { position: absolute; left: 39px; top: 1367px; width: 315px; height: 5px; border-radius: 3px; background: #4e4e4e; }

/* iPhone */
.iphone { position: absolute; left: 2165px; top: 220px; width: 698px; height: 1462px; padding: 19px 20px; background: #0f0f0f; border: 5px solid #3a3a3a; border-radius: 122px; box-shadow: 0 18px 50px rgba(0,0,0,.42); }
.bl1 { left: -14px; top: 259px; width: 9px; height: 48px; }
.bl2 { left: -14px; top: 390px; width: 9px; height: 93px; }
.bl3 { left: -14px; top: 516px; width: 9px; height: 94px; }
.br1 { right: -14px; top: 426px; width: 9px; height: 148px; }
.phone-screen { position: relative; width: 649px; height: 1415px; border-radius: 100px; overflow: hidden; background: #fff; display: flex; flex-direction: column; }
.ph-status { flex: none; display: flex; align-items: center; margin-top: 20px; height: 55px; padding-left: 88px; }
.ph-time { width: 70px; font-size: 28px; font-weight: 600; color: #000; white-space: nowrap; letter-spacing: -.6px; }
.island { width: 185px; height: 55px; margin-left: 74px; border-radius: 28px; background: #0f0f0f; }
.ph-dots { margin-left: 44px; display: flex; gap: 3px; margin-top: 14px; }
.ph-dots i { width: 6px; height: 6px; border-radius: 1.500px; background: #c9c9c9; }
.ph-wifi { margin-left: 11px; margin-top: -2px; }
.ph-batt { width: 45px; height: 21px; margin-left: 12px; margin-top: -2px; border: 2px solid #888; border-radius: 7px; padding: 2px; display: flex; }
.ph-batt i { flex: 1; background: #000; border-radius: 4px; }
.ph-nav { flex: none; height: 50px; margin-top: 16px; display: flex; align-items: center; padding-left: 32px; }
.ph-nav .nav-title { margin-left: 157px; width: 204px; font-size: 24.800px; font-weight: 600; white-space: nowrap; letter-spacing: -.35px; color: #000; }
.ph-sort { margin-left: 95px; }
.ph-plus { margin-left: 31px; }
.phone-screen .search { flex: none; margin: 9px 29px 0; height: 52px; border-radius: 16px; background: #eeeeef; display: flex; align-items: center; gap: 11px; padding-left: 11px; font-size: 24px; color: #8a8a8a; }
.phone-screen .pills { margin-top: 36px; padding-left: 23px; gap: 16px; height: 42px; }
.phone-screen .pill { font-size: 20.600px; width: 117px; padding-bottom: 2px; }
.phone-screen .pill.on { width: 60px; }
.phone-screen .pill:nth-child(3) { width: 111px; }
.phone-screen .pill:nth-child(4) { width: 105px; }
.phone-screen .pill:nth-child(5) { width: auto; padding: 0 18px 2px; }
.phone-screen .list { flex: none; margin-top: 11px; border-top: 2px solid #e8e8e8; padding: 8px 0 0 11px; display: flex; flex-direction: column; gap: 18px; }
.ph-row { display: flex; align-items: center; flex: none; }
.chev { width: 11px; height: 22px; margin-left: 28px; }
.phone-screen .card { width: 600px; height: 118px; border-radius: 27px; padding: 0 20px 0 14px; box-shadow: 0 3px 7px rgba(0,0,0,.1); }
.phone-screen .blue { background: #357af8; }
.phone-screen .purple { background: #a355d6; }
.phone-screen .red { background: #ec4d3f; }
.phone-screen .green { background: #67c569; }
.pink2 { background: #e4445a; }
.phone-screen .ic { width: 71px; height: 71px; margin-right: 4px; }
.phone-screen .ic svg { width: 32px; height: 30px; }
.phone-screen .ic svg.pl { width: 38px; height: 38px; }
.phone-screen .tx { padding-top: 30px; }
.phone-screen .tx h3 { font-size: 24.500px; line-height: 32px; margin-bottom: 2px; }
.phone-screen .tx p { font-size: 17.500px; line-height: 24px; letter-spacing: .1px; }
.phone-screen .slot { width: 100px; padding-top: 15px; }
.phone-screen .tr b { font-size: 40px; line-height: 44px; margin-bottom: 7px; }
.phone-screen .tr span, .phone-screen .tr em { font-size: 18px; line-height: 20px; }
.fab-ph { width: 88px; height: 89px; left: 532px; top: 1246px; }
.home-ph { position: absolute; left: 209px; top: 1396px; width: 232px; height: 7px; border-radius: 4px; background: #333; }

/* popover */
.popover { position: absolute; z-index: 6; left: 1342px; top: 71px; width: 676px; height: 779px; background: #f3e7ee; border-radius: 24px; box-shadow: 0 8px 36px rgba(0,0,0,.28); display: flex; flex-direction: column; }
.pop-arrow { position: absolute; left: 275px; top: -25px; }
.pop-head { flex: none; height: 83px; background: #ececec; border-bottom: 2px solid #ddd2da; border-radius: 24px 24px 0 0; display: flex; align-items: center; justify-content: space-between; padding: 0 33px; }
.pop-head strong { font-size: 27.300px; font-weight: 600; color: #666; letter-spacing: -.3px; }
.pop-head span { font-size: 22.300px; color: #777; }
.pop-list { flex: none; height: 501px; overflow: hidden; }
.pop-row { height: 150px; border-bottom: 2px solid #ddd2da; display: flex; align-items: center; padding: 0 33px 0 17px; }
.badge { width: 100px; height: 100px; flex: none; border-radius: 50%; color: #fff; display: flex; align-items: baseline; justify-content: center; padding-top: 26px; font-size: 25px; font-weight: 700; }
.badge b { font-size: 39px; line-height: 48px; font-weight: 700; }
.pop-tx { flex: 1; margin-left: 32px; display: flex; flex-direction: column; align-self: flex-start; padding-top: 40px; }
.pop-tx strong { font-size: 27.300px; line-height: 36px; font-weight: 600; color: #4a484a; letter-spacing: -.3px; }
.pop-tx span { font-size: 21.800px; line-height: 32px; margin-top: 3px; color: #777; }
.pop-time { font-size: 28px; color: #777; margin-top: 2px; letter-spacing: .4px; font-variant-numeric: tabular-nums; }
.pop-foot { flex: 1; border-top: 2px solid #ddd2da; display: flex; flex-direction: column; }
.pop-act { display: flex; align-items: center; font-size: 25.500px; color: #48464a; padding-left: 35px; gap: 18px; }
.a-add { height: 63px; }
.a-open { height: 66px; gap: 20px; border-bottom: 2px solid #ddd2da; margin: 0; }
.a-quit { flex: 1; }

/* banner */
.banner { position: absolute; left: 1184px; top: 914px; width: 952px; height: 561px; padding-top: 3px; background: #fff; display: flex; flex-direction: column; justify-content: center; align-items: center; font-family: "Liberation Sans", Arial, sans-serif; font-weight: 700; font-size: 73.300px; line-height: 90.300px; color: #6f2a96; text-align: center; }
.banner p { white-space: nowrap; }
.banner .dash-line { padding-right: 9px; }

/* dock */
.dock { position: absolute; left: 62px; top: 1692px; width: 2754px; height: 98px; background: #f9dee6; border-radius: 30px; box-shadow: 0 0 6px rgba(0,0,0,.25); display: flex; align-items: flex-start; padding: 15px 0 0 16px; gap: 21px; }
.di { position: relative; width: 60px; height: 62px; flex: none; display: flex; justify-content: center; align-items: center; }
.di > svg { flex: none; }
.run::after { content: ""; position: absolute; left: 26px; top: 71px; width: 7px; height: 8px; border-radius: 50%; background: #7a5a68; }
.dsep { width: 1px; height: 70px; background: #a88f9b; flex: none; margin: -1px 8px 0 7px; }
.dsep.s2 { margin: -1px 0 0 7px; }
.thumb { width: 72px; height: 66px; flex: none; margin-top: 10px; }
.thumb.t2 { margin-left: -10px; }
.trash { flex: none; margin: -5px 0 0 -6px; }
.d-badge { position: absolute; left: 49px; top: -9px; width: 30px; height: 30px; border-radius: 50%; background: #ec5545; color: #fff; font-size: 16px; display: flex; align-items: center; justify-content: center; }
.d-apr { font-family: "Inter", sans-serif; font-size: 13px; font-weight: 600; fill: #fff; }
.d-30 { font-family: "Inter", sans-serif; font-size: 33px; font-weight: 400; fill: #222; }
.d-s { font-family: "Inter", sans-serif; font-size: 36px; font-weight: 700; fill: #fff; }
.d-zoom { font-family: "Inter", sans-serif; font-size: 17px; font-weight: 600; fill: #fff; letter-spacing: -.5px; }
.hammer { position: absolute; left: 4px; top: -5px; }
.white-burst { stroke: #fff; }
```
